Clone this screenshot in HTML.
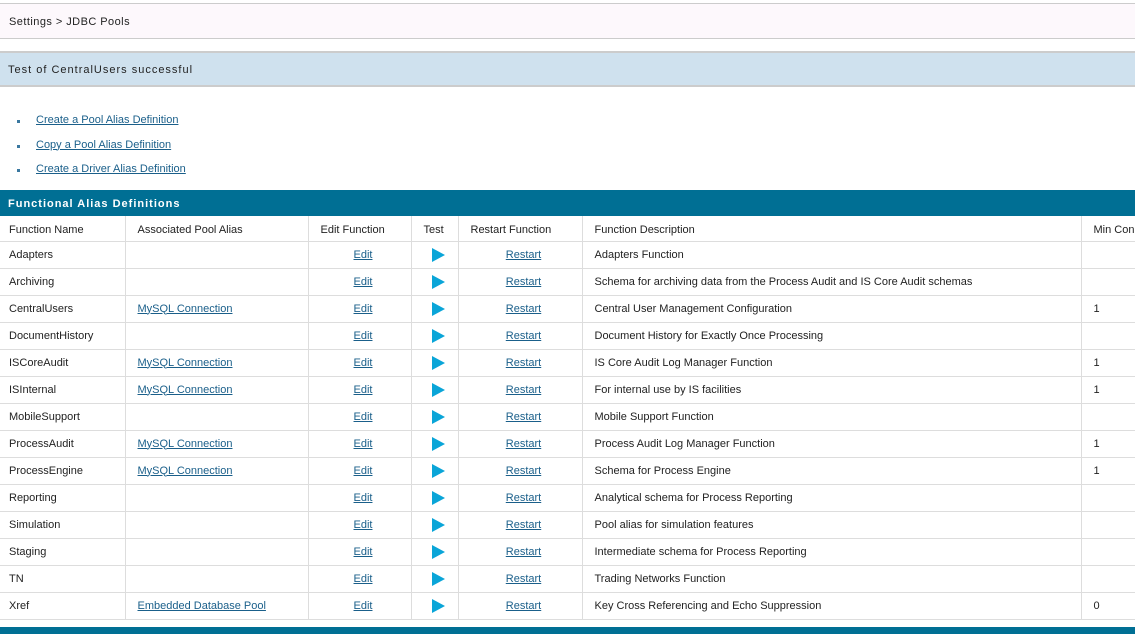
<!DOCTYPE html>
<html><head><style>
*{margin:0;padding:0;box-sizing:border-box}
body{width:1135px;height:634px;overflow:hidden;background:#fff;font-family:"Liberation Sans",Arial,sans-serif;font-size:11px;color:#222;position:relative}
.crumb{position:absolute;top:3px;left:0;width:1135px;height:36px;background:#fdf8fc;border-top:1px solid #ccc;border-bottom:1px solid #ccc;padding:12px 0 0 9px;letter-spacing:0.45px}
.msg{position:absolute;top:51px;left:0;width:1135px;height:36px;background:#cfe1ee;border-top:2px solid #ccc;border-bottom:2px solid #ccc;padding:11px 0 0 8px;letter-spacing:1px}
a{color:#1a5f8a;text-decoration:underline}
.links{position:absolute;left:17px;top:114px}
.links div{height:24.5px;position:relative;padding-left:19px}
.links div:before{content:"";position:absolute;left:0;top:6px;width:3px;height:3px;background:#3a78a0}
.bar{position:absolute;top:190px;left:0;width:1135px;height:26px;background:#006f94;color:#fff;font-weight:bold;padding:8px 0 0 8px;letter-spacing:1px}
table{position:absolute;top:216px;left:0;border-collapse:collapse;table-layout:fixed;width:1200px}
td{border:1px solid #ddd;height:27px;padding:0 0 0 12px;white-space:nowrap;overflow:hidden;vertical-align:middle}
td:first-child{padding-left:9px;border-left:none}
tr.h td{height:25px;border-top:none;padding-top:3px}
td.c{text-align:center;padding:0 0 0 7px}
.tri{display:inline-block;width:0;height:0;border-left:13px solid #0aa5d8;border-top:7px solid transparent;border-bottom:7px solid transparent;vertical-align:middle}
.bot{position:absolute;top:627px;left:0;width:1135px;height:7px;background:#006f94}
</style></head><body>
<div class="crumb">Settings &gt; JDBC Pools</div>
<div class="msg">Test of CentralUsers successful</div>
<div class="links">
<div><a>Create a Pool Alias Definition</a></div>
<div><a>Copy a Pool Alias Definition</a></div>
<div><a>Create a Driver Alias Definition</a></div>
</div>
<div class="bar">Functional Alias Definitions</div>
<table>
<colgroup><col style="width:125px"><col style="width:183px"><col style="width:103px"><col style="width:47px"><col style="width:124px"><col style="width:499px"><col style="width:119px"></colgroup>
<tr class="h"><td>Function Name</td><td>Associated Pool Alias</td><td>Edit Function</td><td>Test</td><td>Restart Function</td><td>Function Description</td><td>Min Connections</td></tr>
<tr><td>Adapters</td><td></td><td class="c"><a>Edit</a></td><td class="c"><span class="tri"></span></td><td class="c"><a>Restart</a></td><td>Adapters Function</td><td></td></tr>
<tr><td>Archiving</td><td></td><td class="c"><a>Edit</a></td><td class="c"><span class="tri"></span></td><td class="c"><a>Restart</a></td><td>Schema for archiving data from the Process Audit and IS Core Audit schemas</td><td></td></tr>
<tr><td>CentralUsers</td><td><a>MySQL Connection</a></td><td class="c"><a>Edit</a></td><td class="c"><span class="tri"></span></td><td class="c"><a>Restart</a></td><td>Central User Management Configuration</td><td>1</td></tr>
<tr><td>DocumentHistory</td><td></td><td class="c"><a>Edit</a></td><td class="c"><span class="tri"></span></td><td class="c"><a>Restart</a></td><td>Document History for Exactly Once Processing</td><td></td></tr>
<tr><td>ISCoreAudit</td><td><a>MySQL Connection</a></td><td class="c"><a>Edit</a></td><td class="c"><span class="tri"></span></td><td class="c"><a>Restart</a></td><td>IS Core Audit Log Manager Function</td><td>1</td></tr>
<tr><td>ISInternal</td><td><a>MySQL Connection</a></td><td class="c"><a>Edit</a></td><td class="c"><span class="tri"></span></td><td class="c"><a>Restart</a></td><td>For internal use by IS facilities</td><td>1</td></tr>
<tr><td>MobileSupport</td><td></td><td class="c"><a>Edit</a></td><td class="c"><span class="tri"></span></td><td class="c"><a>Restart</a></td><td>Mobile Support Function</td><td></td></tr>
<tr><td>ProcessAudit</td><td><a>MySQL Connection</a></td><td class="c"><a>Edit</a></td><td class="c"><span class="tri"></span></td><td class="c"><a>Restart</a></td><td>Process Audit Log Manager Function</td><td>1</td></tr>
<tr><td>ProcessEngine</td><td><a>MySQL Connection</a></td><td class="c"><a>Edit</a></td><td class="c"><span class="tri"></span></td><td class="c"><a>Restart</a></td><td>Schema for Process Engine</td><td>1</td></tr>
<tr><td>Reporting</td><td></td><td class="c"><a>Edit</a></td><td class="c"><span class="tri"></span></td><td class="c"><a>Restart</a></td><td>Analytical schema for Process Reporting</td><td></td></tr>
<tr><td>Simulation</td><td></td><td class="c"><a>Edit</a></td><td class="c"><span class="tri"></span></td><td class="c"><a>Restart</a></td><td>Pool alias for simulation features</td><td></td></tr>
<tr><td>Staging</td><td></td><td class="c"><a>Edit</a></td><td class="c"><span class="tri"></span></td><td class="c"><a>Restart</a></td><td>Intermediate schema for Process Reporting</td><td></td></tr>
<tr><td>TN</td><td></td><td class="c"><a>Edit</a></td><td class="c"><span class="tri"></span></td><td class="c"><a>Restart</a></td><td>Trading Networks Function</td><td></td></tr>
<tr><td>Xref</td><td><a>Embedded Database Pool</a></td><td class="c"><a>Edit</a></td><td class="c"><span class="tri"></span></td><td class="c"><a>Restart</a></td><td>Key Cross Referencing and Echo Suppression</td><td>0</td></tr>
</table>
<div class="bot"></div>
</body></html>
